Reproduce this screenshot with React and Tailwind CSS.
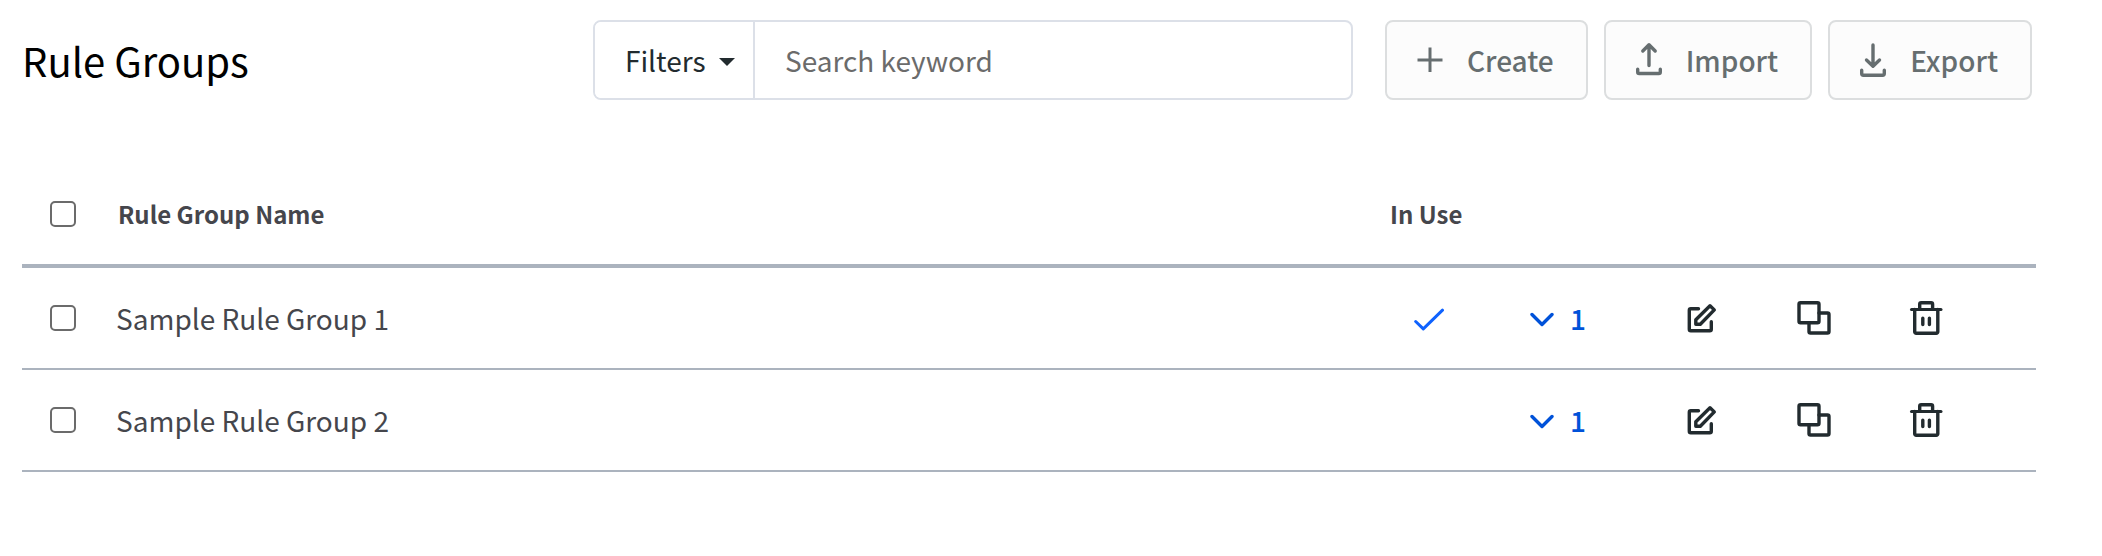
import { useState } from 'react';

const initialGroups = [
  { id: 1, name: 'Sample Rule Group 1', inUse: true, count: 1 },
  { id: 2, name: 'Sample Rule Group 2', inUse: false, count: 1 },
];

const Icon = ({ children, width = 36, height = 36, strokeWidth = 3.4 }) => (
  <svg
    width={width}
    height={height}
    viewBox={`0 0 ${width} ${height}`}
    fill="none"
    stroke="currentColor"
    strokeWidth={strokeWidth}
    strokeLinecap="round"
    strokeLinejoin="round"
    aria-hidden="true"
  >
    {children}
  </svg>
);

const PlusIcon = () => (
  <Icon width={26} strokeWidth={3}>
    <path strokeLinecap="butt" d="M0.5 18h25M13 5.5v24.5" />
  </Icon>
);

const ImportIcon = () => (
  <Icon width={26}>
    <path d="M13 23.5V2.8M6.8 9L13 2.8L19.2 9M1.7 27.3V30a1.5 1.5 0 0 0 1.5 1.5h19.6a1.5 1.5 0 0 0 1.5-1.5V27.3" />
  </Icon>
);

const ExportIcon = () => (
  <Icon width={26}>
    <path d="M13 3v20.8M6.5 18L13 24.2L19.5 18M1.7 28.3V31.5a1.7 1.7 0 0 0 1.7 1.7h19.2a1.7 1.7 0 0 0 1.7-1.7V28.3" />
  </Icon>
);

const CheckIcon = () => (
  <Icon width={30} height={26} strokeWidth={3}>
    <path d="M1.7 16.5L9.3 23.8L28.5 5.2" />
  </Icon>
);

const ChevronIcon = () => (
  <Icon width={24} height={18}>
    <path d="M2 5.5l10 10L22 5.5" />
  </Icon>
);

const EditIcon = () => (
  <Icon>
    <path d="M15.5 8.7H7.8A1.5 1.5 0 0 0 6.3 10.2V29.3a1.5 1.5 0 0 0 1.5 1.5H26.8a1.5 1.5 0 0 0 1.5-1.5V21.8" />
    <path d="M27 5.7L31.3 9.9L17.3 24.3H12.8V19.7z" />
  </Icon>
);

const CopyIcon = () => (
  <Icon>
    <rect x="3" y="2.8" width="20" height="20" rx="1.5" />
    <path d="M23 13h8.5a1.5 1.5 0 0 1 1.5 1.5V31.5a1.5 1.5 0 0 1-1.5 1.5H14.5a1.5 1.5 0 0 1-1.5-1.5V23" />
  </Icon>
);

const TrashIcon = () => (
  <Icon>
    <path strokeWidth="3" d="M3.5 9.4H33" />
    <path d="M6.7 9.4V31.8a1.5 1.5 0 0 0 1.5 1.5H28.3a1.5 1.5 0 0 0 1.5-1.5V9.4M11.7 9.4V4.3a1.5 1.5 0 0 1 1.5-1.5h9.9a1.5 1.5 0 0 1 1.5 1.5V9.4M14.8 18.2v6.4M21.4 18.2v6.4" />
  </Icon>
);

const ToolbarButton = ({ icon, children }) => (
  <button
    type="button"
    className="flex items-center gap-6 h-20 pl-[30px] pr-8 border-2 border-[#dcdedf] rounded-lg bg-[#fcfcfc] text-[28px] font-medium text-[#666e70] hover:bg-gray-100"
  >
    {icon}
    {children}
  </button>
);

const Checkbox = ({ label, checked, onChange }) => (
  <input
    type="checkbox"
    aria-label={label}
    checked={checked}
    onChange={onChange}
    className="block ml-7 w-[26px] h-[26px] appearance-none border-2 border-[#6b6b6b] rounded-[5px] bg-white checked:bg-[#0052d9]"
  />
);

const RowAction = ({ label, children }) => (
  <button type="button" aria-label={label} title={label} className="block mx-auto text-[#222b2f] hover:text-[#0052d9]">
    {children}
  </button>
);

const App = () => {
  const [selected, setSelected] = useState([]);
  const [keyword, setKeyword] = useState('');

  const groups = initialGroups.filter((group) =>
    group.name.toLowerCase().includes(keyword.toLowerCase())
  );

  const toggleAll = () => {
    setSelected(selected.length === initialGroups.length ? [] : initialGroups.map((group) => group.id));
  };

  const toggleGroup = (id) => {
    setSelected(selected.includes(id) ? selected.filter((item) => item !== id) : [...selected, id]);
  };

  return (
    <main className="min-h-screen bg-white pt-5 pl-[22px] pr-[66px] font-['Noto_Sans_CJK_SC','Noto_Sans',sans-serif] text-[28px] leading-10 text-[#45464c]">
      {/* Toolbar */}
      <header className="flex items-center gap-8 pr-1">
        <h1 className="flex-1 text-[40px] leading-[60px] text-black whitespace-nowrap">Rule Groups</h1>

        <div className="flex w-[760px] min-w-0 h-20 border-2 border-[#dce0e8] rounded-lg overflow-hidden">
          <div className="relative shrink-0 w-[160px] border-r-2 border-[#dce0e8]">
            <select
              aria-label="Filters"
              className="w-full h-full pl-[30px] appearance-none bg-white text-[#222b2f]"
            >
              <option>Filters</option>
            </select>
            <svg className="absolute right-[18px] top-9 pointer-events-none" width="16" height="8" viewBox="0 0 16 8" fill="#222b2f" aria-hidden="true">
              <path d="M0 0h16L8 8z" />
            </svg>
          </div>
          <input
            type="text"
            aria-label="Search keyword"
            placeholder="Search keyword"
            value={keyword}
            onChange={(e) => setKeyword(e.target.value)}
            className="flex-1 min-w-0 px-[30px] outline-none placeholder:text-[#6b6b6b]"
          />
        </div>

        <div className="flex gap-4">
          <ToolbarButton icon={<PlusIcon />}>Create</ToolbarButton>
          <ToolbarButton icon={<ImportIcon />}>Import</ToolbarButton>
          <ToolbarButton icon={<ExportIcon />}>Export</ToolbarButton>
        </div>
      </header>

      {/* Rule groups */}
      <table className="w-full mt-16 table-fixed border-separate border-spacing-0 text-left">
        <colgroup>
          <col className="w-[94px]" />
          <col />
          <col className="w-[110px]" />
          <col className="w-[160px]" />
          <col className="w-[114px]" />
          <col className="w-[112px]" />
          <col className="w-[166px]" />
        </colgroup>
        <thead>
          <tr className="h-[104px] text-[24px] *:border-b-4 *:border-[#abb3be]">
            <th className="p-0">
              <Checkbox
                label="Select all rule groups"
                checked={selected.length === initialGroups.length}
                onChange={toggleAll}
              />
            </th>
            <th className="p-0 pl-0.5 font-bold">Rule Group Name</th>
            <th className="p-0 pl-4 font-bold whitespace-nowrap">In Use</th>
            <th colSpan={4} className="p-0" />
          </tr>
        </thead>
        <tbody>
          {groups.map((group) => (
            <tr key={group.id} className="h-[102px] *:border-b-2 *:border-[#abb3be]">
              <td className="p-0">
                <Checkbox
                  label={`Select ${group.name}`}
                  checked={selected.includes(group.id)}
                  onChange={() => toggleGroup(group.id)}
                />
              </td>
              <td className="p-0">{group.name}</td>
              <td className="p-0">
                {group.inUse && (
                  <span className="flex justify-center text-[#0f62fe]">
                    <CheckIcon />
                  </span>
                )}
              </td>
              <td className="p-0">
                <button type="button" className="flex items-center gap-4 ml-[46px] font-medium text-[#0052d9]">
                  <ChevronIcon />
                  {group.count}
                </button>
              </td>
              <td className="p-0">
                <RowAction label="Edit">
                  <EditIcon />
                </RowAction>
              </td>
              <td className="p-0">
                <RowAction label="Duplicate">
                  <CopyIcon />
                </RowAction>
              </td>
              <td className="p-0 pr-[54px]">
                <RowAction label="Delete">
                  <TrashIcon />
                </RowAction>
              </td>
            </tr>
          ))}
        </tbody>
      </table>
    </main>
  );
};

export default App;
